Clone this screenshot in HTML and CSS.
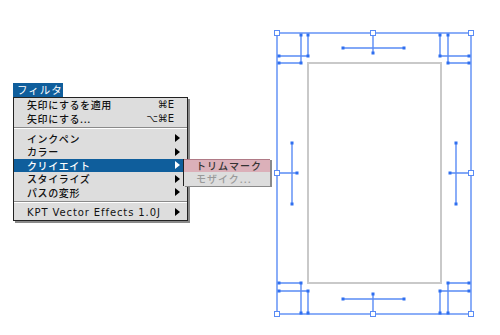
FILE: index.html
```html
<!DOCTYPE html>
<html>
<head>
    <title>フィルタ</title>
    <link rel="stylesheet" href="styles.css">
</head>
<body>
    <div class="stage">
        <div class="menu-area">
            <div class="menu-title">フィルタ</div>
            <ul class="menu">
                <li class="item"><span class="label">矢印にするを適用</span><span class="key">⌘E</span></li>
                <li class="item"><span class="label">矢印にする...</span><span class="key">⌥⌘E</span></li>
                <li class="sep"></li>
                <li class="item has-sub"><span class="label">インクペン</span></li>
                <li class="item has-sub"><span class="label">カラー</span></li>
                <li class="item has-sub active">
                    <span class="label">クリイエイト</span>
                    <ul class="submenu">
                        <li class="sub-item picked">トリムマーク</li>
                        <li class="sub-item disabled">モザイク...</li>
                    </ul>
                </li>
                <li class="item has-sub"><span class="label">スタイライズ</span></li>
                <li class="item has-sub"><span class="label">パスの変形</span></li>
                <li class="sep"></li>
                <li class="item has-sub"><span class="label latin">KPT Vector Effects 1.0J</span></li>
            </ul>
        </div>

        <!-- artboard with trim marks, coordinates are page pixels -->
        <svg class="artboard" width="230" height="335" viewBox="270 0 230 335">
            <rect class="page" x="308" y="63" width="133" height="220"/>
            <g class="line">
                <rect x="277" y="33" width="194" height="281" fill="none"/>
                <!-- top left -->
                <path d="M301 35V63M308 35V56M279 56H308M279 63H301"/>
                <!-- top right -->
                <path d="M440 35V56M448 35V63M440 56H469M448 63H469"/>
                <!-- bottom left -->
                <path d="M279 283H301M279 291H308M301 283V313M308 291V313"/>
                <!-- bottom right -->
                <path d="M448 283H469M440 291H469M440 291V313M448 283V313"/>
                <!-- middles -->
                <path d="M343 48H404M373 33V53"/>
                <path d="M343 299H404M373 294V314"/>
                <path d="M292 143V204M277 173H297"/>
                <path d="M456 143V204M450 173H471"/>
            </g>
            <g class="dot">
                <rect x="299.5" y="33.5" width="3" height="3"/>
                <rect x="306.5" y="33.5" width="3" height="3"/>
                <rect x="277.5" y="54.5" width="3" height="3"/>
                <rect x="306.5" y="54.5" width="3" height="3"/>
                <rect x="277.5" y="61.5" width="3" height="3"/>
                <rect x="299.5" y="61.5" width="3" height="3"/>

                <rect x="438.5" y="33.5" width="3" height="3"/>
                <rect x="446.5" y="33.5" width="3" height="3"/>
                <rect x="438.5" y="54.5" width="3" height="3"/>
                <rect x="467.5" y="54.5" width="3" height="3"/>
                <rect x="446.5" y="61.5" width="3" height="3"/>
                <rect x="467.5" y="61.5" width="3" height="3"/>

                <rect x="277.5" y="281.5" width="3" height="3"/>
                <rect x="299.5" y="281.5" width="3" height="3"/>
                <rect x="277.5" y="289.5" width="3" height="3"/>
                <rect x="306.5" y="289.5" width="3" height="3"/>
                <rect x="299.5" y="311.5" width="3" height="3"/>
                <rect x="306.5" y="311.5" width="3" height="3"/>

                <rect x="446.5" y="281.5" width="3" height="3"/>
                <rect x="467.5" y="281.5" width="3" height="3"/>
                <rect x="438.5" y="289.5" width="3" height="3"/>
                <rect x="467.5" y="289.5" width="3" height="3"/>
                <rect x="438.5" y="311.5" width="3" height="3"/>
                <rect x="446.5" y="311.5" width="3" height="3"/>

                <rect x="341.5" y="46.5" width="3" height="3"/>
                <rect x="402.5" y="46.5" width="3" height="3"/>
                <rect x="371.5" y="51.5" width="3" height="3"/>
                <rect x="341.5" y="297.5" width="3" height="3"/>
                <rect x="402.5" y="297.5" width="3" height="3"/>
                <rect x="371.5" y="292.5" width="3" height="3"/>

                <rect x="290.5" y="141.5" width="3" height="3"/>
                <rect x="290.5" y="202.5" width="3" height="3"/>
                <rect x="295.5" y="171.5" width="3" height="3"/>
                <rect x="454.5" y="141.5" width="3" height="3"/>
                <rect x="454.5" y="202.5" width="3" height="3"/>
                <rect x="448.5" y="171.5" width="3" height="3"/>
            </g>
            <g class="handle">
                <rect x="274.5" y="30.5" width="5" height="5"/>
                <rect x="468.5" y="30.5" width="5" height="5"/>
                <rect x="274.5" y="311.5" width="5" height="5"/>
                <rect x="468.5" y="311.5" width="5" height="5"/>
                <rect x="370.5" y="30.5" width="5" height="5"/>
                <rect x="370.5" y="311.5" width="5" height="5"/>
                <rect x="274.5" y="170.5" width="5" height="5"/>
                <rect x="468.5" y="170.5" width="5" height="5"/>
            </g>
        </svg>
    </div>
</body>
</html>
```

FILE: styles.css
```css
body {
    margin: 0;
    background: #ffffff;
    font-family: "Noto Sans CJK JP", "DejaVu Sans", sans-serif;
}
.stage {
    display: flex;
    width: 500px;
    height: 335px;
}
.menu-area {
    width: 270px;
    padding: 83px 0 0 13px;
    box-sizing: border-box;
}
.menu-title {
    width: 50px;
    height: 14px;
    line-height: 14px;
    padding-left: 4px;
    box-sizing: border-box;
    background: #0f5e9c;
    color: #ffffff;
    font-size: 10.5px;
    letter-spacing: 1px;
}
.menu {
    list-style: none;
    margin: 0;
    padding: 0 0 1px;
    width: 175px;
    box-sizing: border-box;
    background: #dddddd;
    border: 1px solid #222222;
    box-shadow: 2px 2px 0 #8a8a8a;
}
.item {
    position: relative;
    display: flex;
    align-items: center;
    height: 13.5px;
    padding: 0 8px 0 13px;
    font-size: 10px;
    font-weight: 500;
    letter-spacing: 0.6px;
    color: #111111;
}
.label {
    flex: 1;
    white-space: nowrap;
}
.latin {
    font-family: "DejaVu Sans", sans-serif;
    font-weight: normal;
    font-size: 10px;
    letter-spacing: 0.9px;
}
.key {
    font-family: "DejaVu Sans", sans-serif;
    font-weight: normal;
    font-size: 10px;
    letter-spacing: 0;
    margin-right: 5px;
}
.has-sub::after {
    content: "";
    border-left: 5px solid #000000;
    border-top: 4.5px solid transparent;
    border-bottom: 4.5px solid transparent;
    margin-right: -1px;
}
.active {
    background: #0f5e9c;
    color: #ffffff;
}
.active::after {
    border-left-color: #ffffff;
}
.sep {
    height: 6.5px;
    display: flex;
    flex-direction: column;
    justify-content: center;
}
.sep::before {
    content: "";
    height: 1px;
    background: #8a8a8a;
    border-bottom: 1px solid #ffffff;
}
.submenu {
    position: absolute;
    left: 169px;
    top: 0;
    list-style: none;
    margin: 0;
    padding: 0;
    width: 86px;
    background: #dddddd;
    border-left: 1px solid #222222;
    box-shadow: 2px 1px 0 #8a8a8a;
}
.sub-item {
    height: 13.5px;
    line-height: 13px;
    padding-left: 12px;
    font-size: 10px;
    font-weight: 500;
    letter-spacing: 1px;
    overflow: hidden;
}
.picked {
    background: #dbb0b9;
    color: #333333;
    border-top: 1px solid #b07a86;
    height: 12.5px;
    line-height: 12.5px;
}
.disabled {
    color: #9a9a9a;
}
.artboard {
    display: block;
}
.page {
    fill: none;
    stroke: #c9c9c9;
    stroke-width: 2;
}
.line path,
.line rect {
    fill: none;
    stroke: #5a8cf5;
    stroke-width: 1.4;
}
.dot rect {
    fill: #2f6ff0;
}
.handle rect {
    fill: #ffffff;
    stroke: #5a8cf5;
    stroke-width: 1;
}
```
